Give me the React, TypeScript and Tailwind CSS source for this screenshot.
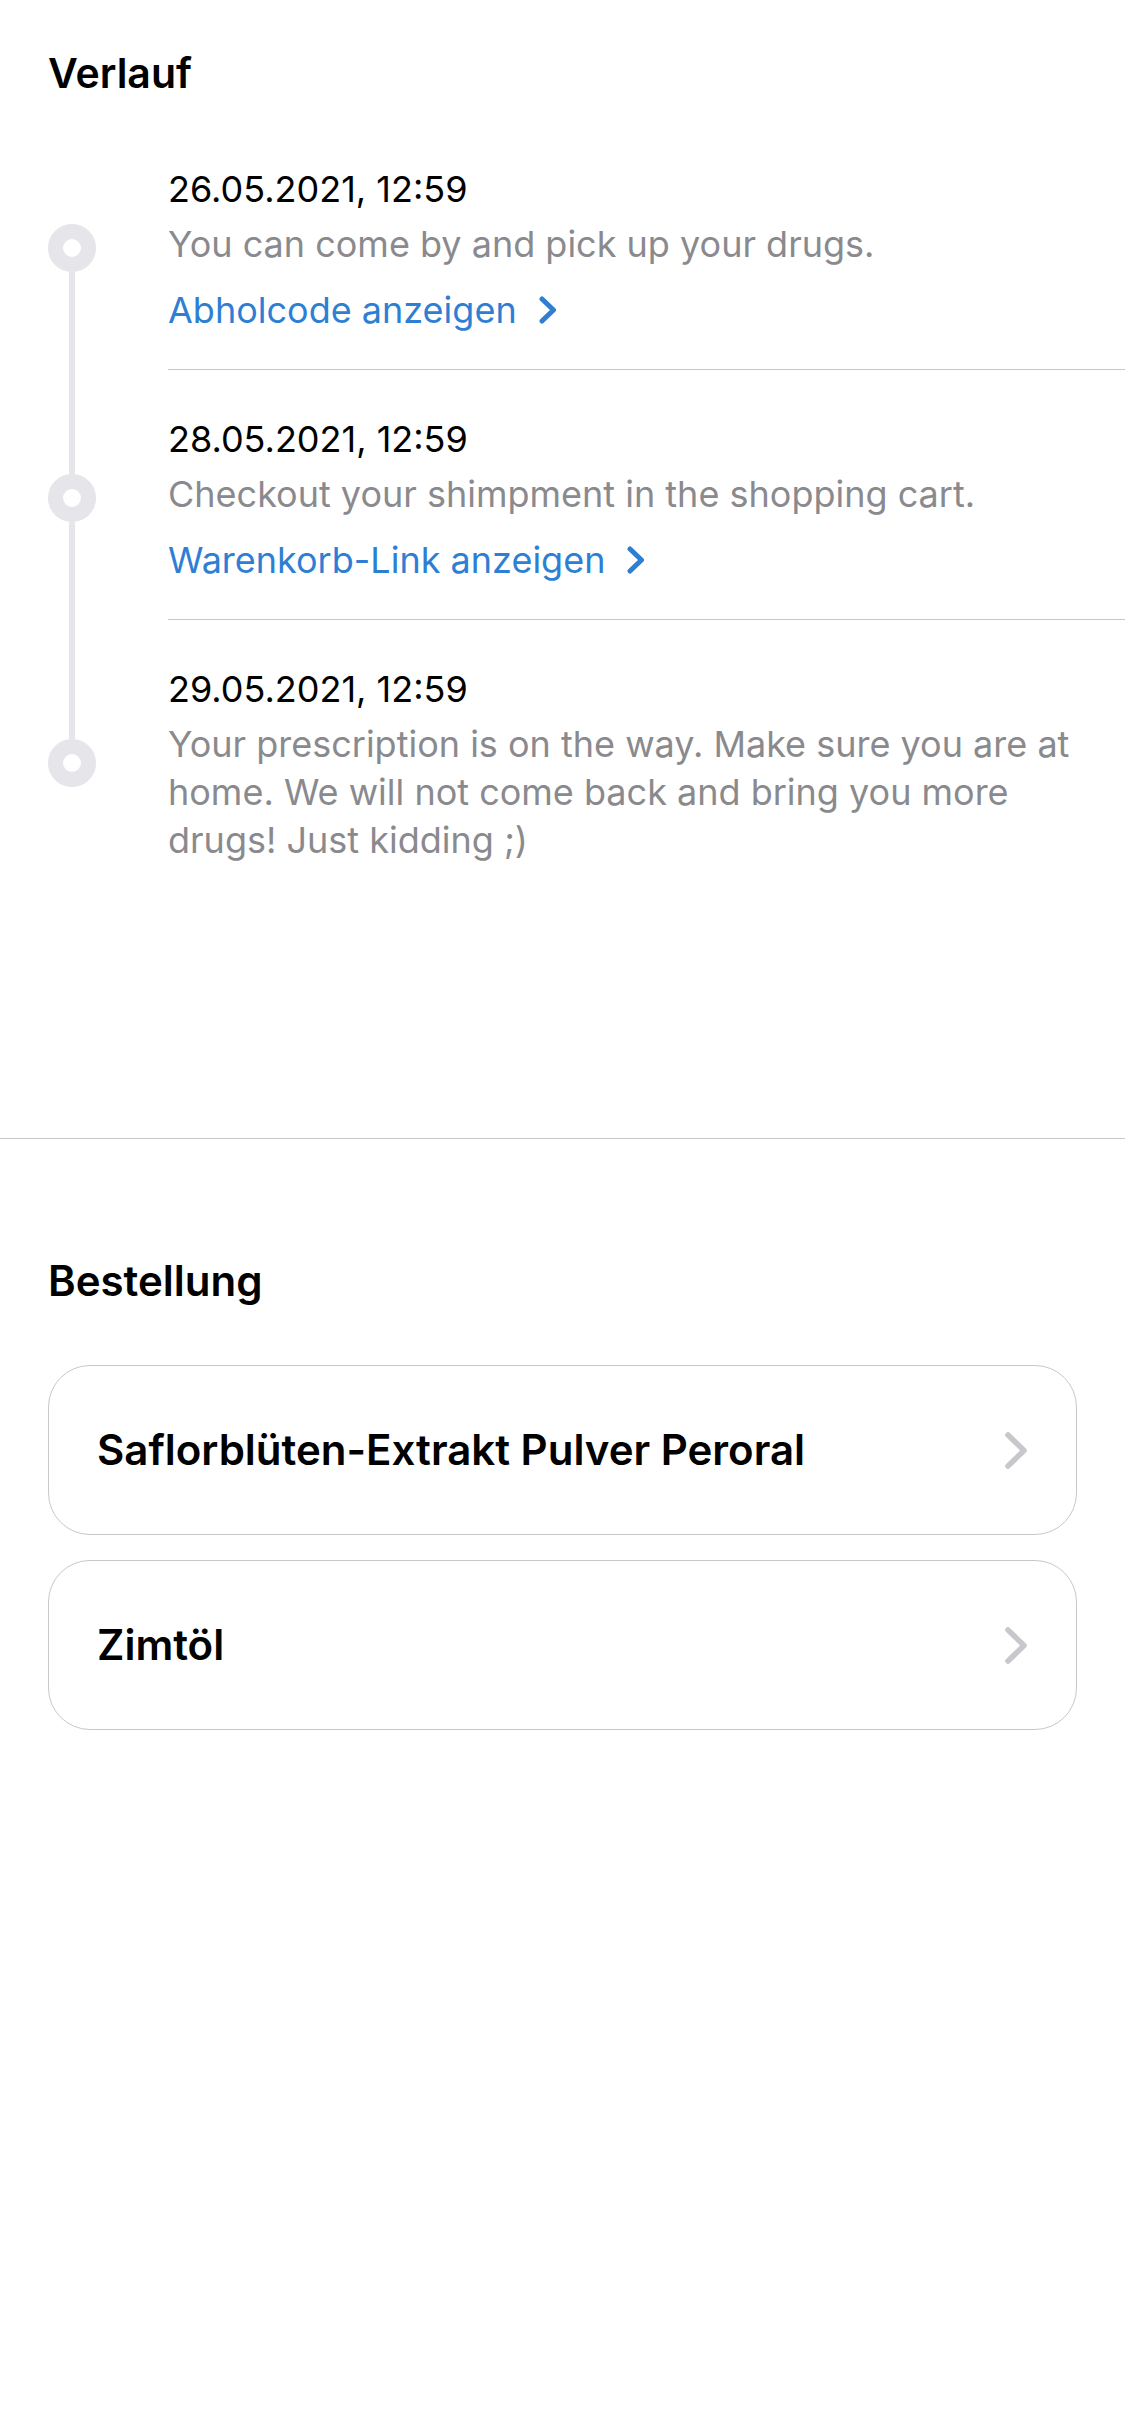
const events = [
  {
    date: '26.05.2021, 12:59',
    text: 'You can come by and pick up your drugs.',
    link: 'Abholcode anzeigen',
  },
  {
    date: '28.05.2021, 12:59',
    text: 'Checkout your shimpment in the shopping cart.',
    link: 'Warenkorb-Link anzeigen',
  },
  {
    date: '29.05.2021, 12:59',
    text: 'Your prescription is on the way. Make sure you are at home. We will not come back and bring you more drugs! Just kidding ;)',
  },
];

const items = ['Saflorblüten-Extrakt Pulver Peroral', 'Zimtöl'];

function LinkChevron() {
  return (
    <svg width="18" height="28" viewBox="0 0 18 28" fill="none">
      <path d="M3 3L14.5 14L3 25" stroke="currentColor" strokeWidth="5" strokeLinecap="round" strokeLinejoin="round" />
    </svg>
  );
}

function CardChevron() {
  return (
    <svg width="22" height="37" viewBox="0 0 22 37" fill="none">
      <path d="M3 3L19 18.5L3 34" stroke="#c7c7cc" strokeWidth="5.5" strokeLinecap="round" strokeLinejoin="round" />
    </svg>
  );
}

export default function App() {
  return (
    <div className="min-h-screen bg-white font-['Inter',sans-serif] text-black">
      <section className="pl-[48px] pt-[48px]">
        <h2 className="text-[41px] font-semibold leading-[50px]">Verlauf</h2>

        <ol className="mt-[22px]">
          {events.map((event, index) => {
            const first = index === 0;
            const last = index === events.length - 1;
            return (
              <li key={event.date} className="flex">
                <div className="flex w-[48px] shrink-0 flex-col items-center">
                  <div className={first ? 'w-[6px] grow basis-[43px]' : 'w-[6px] grow basis-[43px] bg-[#e5e5ea]'} />
                  <div className="size-[48px] shrink-0 rounded-full border-[15px] border-[#e5e5ea] bg-white" />
                  <div className={last ? 'w-[6px] grow basis-[37px]' : 'w-[6px] grow basis-[37px] bg-[#e5e5ea]'} />
                </div>

                <div
                  className={
                    last
                      ? 'ml-[72px] flex-1 pb-[35px] pr-[48px] pt-[45px]'
                      : 'ml-[72px] flex-1 border-b-[1.5px] border-[#c8c8c8] pb-[35px] pr-[48px] pt-[45px]'
                  }
                >
                  <p className="text-[36px] leading-[48px]">{event.date}</p>
                  <p className="mt-[7px] text-[36px] leading-[48px] text-[#8a8a8e]">{event.text}</p>
                  {event.link && (
                    <button
                      type="button"
                      className="mt-[18px] flex items-center gap-[22px] text-[36px] leading-[48px] text-[#2e7fd3]"
                    >
                      {event.link}
                      <LinkChevron />
                    </button>
                  )}
                </div>
              </li>
            );
          })}
        </ol>
      </section>

      <section className="mt-[239px] border-t-[1.5px] border-[#c8c8c8] px-[48px] pt-[117px]">
        <h2 className="text-[42px] font-semibold leading-[50px]">Bestellung</h2>

        <div className="mt-[59px] flex flex-col gap-[25px]">
          {items.map((item) => (
            <button
              key={item}
              type="button"
              className="flex h-[170px] items-center justify-between rounded-[42px] border-[1.5px] border-[#c8c8c8] pl-[48px] pr-[49px] text-left"
            >
              <span className="text-[42px] font-semibold leading-[50px]">{item}</span>
              <CardChevron />
            </button>
          ))}
        </div>
      </section>
    </div>
  );
}
